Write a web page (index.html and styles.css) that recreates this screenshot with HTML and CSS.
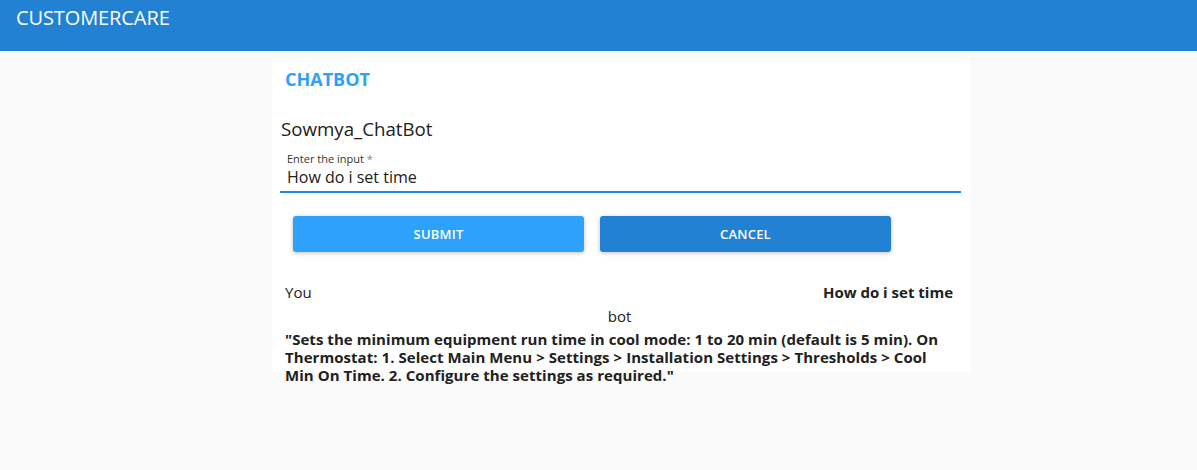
FILE: index.html
```html
<!DOCTYPE html>
<html>
<head>
<meta charset="utf-8">
<link rel="stylesheet" href="styles.css">
</head>
<body>
<header class="appbar"><div class="brand">CUSTOMERCARE</div></header>
<main class="card">
  <h2 class="card-title">CHATBOT</h2>
  <div class="bot-name">Sowmya_ChatBot</div>
  <div class="field">
    <label class="field-label">Enter the input <span class="req">*</span></label>
    <div class="field-value">How do i set time</div>
  </div>
  <div class="actions">
    <button class="btn btn-submit">SUBMIT</button>
    <button class="btn btn-cancel">CANCEL</button>
  </div>
  <div class="msg-row">
    <span class="who">You</span>
    <span class="user-text">How do i set time</span>
  </div>
  <div class="bot-label">bot</div>
  <div class="bot-text">"Sets the minimum equipment run time in cool mode: 1 to 20 min (default is 5 min). On Thermostat: 1. Select Main Menu &gt; Settings &gt; Installation Settings &gt; Thresholds &gt; Cool Min On Time. 2. Configure the settings as required."</div>
</main>
</body>
</html>
```
FILE: styles.css
```css
html, body {
  margin: 0;
  padding: 0;
}
body {
  background: #fafafa;
  font-family: "Open Sans", "Noto Sans", sans-serif;
  color: #212121;
  width: 1197px;
  height: 470px;
  overflow: hidden;
}
.appbar {
  height: 51px;
  background: #2281d2;
  display: flex;
  align-items: flex-start;
  padding-left: 16px;
}
.brand {
  color: #fff;
  font-size: 20px;
  line-height: 26px;
  margin-top: 5px;
  letter-spacing: -0.1px;
}
.card {
  display: block;
  margin: 6px 0 0 272px;
  width: 698px;
  height: 315px;
  background: #fff;
  box-sizing: border-box;
  padding: 10px 8px 0 9px;
}
.card-title {
  margin: 0 0 0 4px;
  font-size: 18px;
  line-height: 24px;
  font-weight: 700;
  color: #2ea1f8;
}
.bot-name {
  margin-top: 26px;
  font-size: 18.7px;
  line-height: 24px;
}
.field {
  margin-top: 11px;
  padding: 0 0 0 7px;
  border-bottom: 2px solid #1e88e5;
  width: 681px;
  margin-left: -1px;
  box-sizing: border-box;
}
.field-label {
  display: block;
  font-size: 11px;
  line-height: 14px;
  color: #333;
}
.req { color: #888; }
.field-value {
  font-size: 16px;
  line-height: 22px;
  padding-bottom: 3px;
}
.actions {
  display: flex;
  gap: 16px;
  margin-top: 23px;
  padding-left: 12px;
}
.btn {
  width: 291px;
  height: 36px;
  border: 0;
  border-radius: 3px;
  color: #fff;
  font-family: inherit;
  font-size: 13px;
  font-weight: 600;
  letter-spacing: 0.2px;
  box-shadow: 0 1px 4px rgba(0,0,0,0.25);
}
.btn-submit { background: #2ea1fc; }
.btn-cancel { background: #2281d2; }
.msg-row {
  display: flex;
  justify-content: space-between;
  margin-top: 30px;
  padding: 0 9px 0 4px;
  font-size: 15px;
  line-height: 20px;
}
.user-text { font-weight: 700; }
.bot-label {
  text-align: center;
  font-size: 15px;
  line-height: 20px;
  margin-top: 4px;
  padding-right: 4px;
}
.bot-text {
  margin-top: 4px;
  padding-left: 4px;
  font-size: 15px;
  line-height: 18px;
  font-weight: 700;
  width: 660px;
  letter-spacing: 0.05px;
}
```
